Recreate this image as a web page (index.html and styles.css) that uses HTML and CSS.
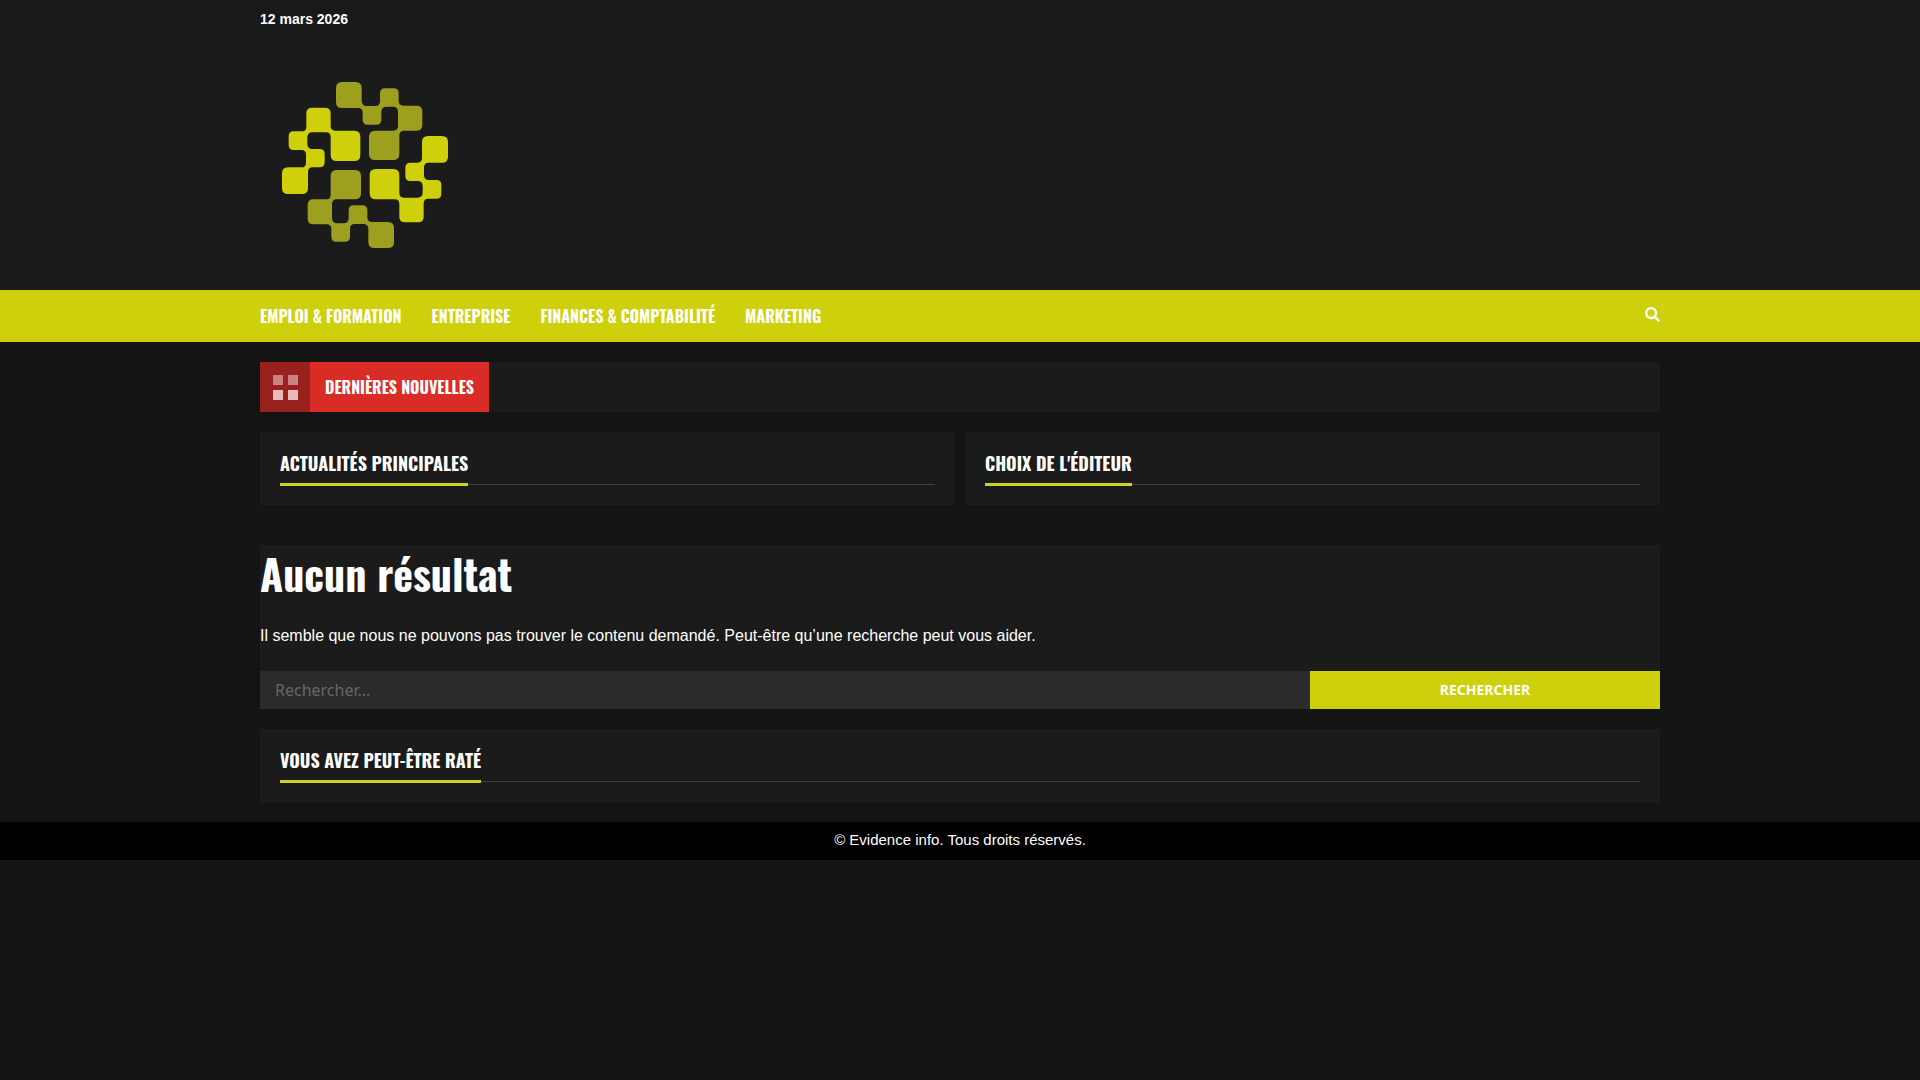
FILE: index.html
```html
<!DOCTYPE html>
<html lang="fr">
<head>
  <meta charset="UTF-8">
  <meta name="viewport" content="width=device-width, initial-scale=1">
  <title>Aucun résultat - Evidence info</title>
  <link rel="stylesheet" href="styles.css">
</head>
<body>
  <header class="site-header">
    <div class="top-bar">
      <div class="container">
        <span class="date">12 mars 2026</span>
      </div>
    </div>
    <div class="branding">
      <div class="container">
        <a href="#" class="logo" aria-label="Evidence info">
          <svg viewBox="0 0 570 570" width="190" height="190">
            <defs>
              <path id="arm-top" d="M216 36H257Q275 36 275 54V94Q276 108 290 108H316Q330 108 330 94V70Q330 55 345 55H371Q386 55 386 70V93Q386 107 400 107H440Q457 107 457 124V165Q457 182 440 182H402Q388 182 388 196V252Q388 270 370 270H315Q297 270 297 252V200Q297 182 315 182H370Q384 182 384 168V126Q384 110 368 110H350Q334 110 334 126V149Q334 164 319 164H293Q278 164 278 149V128Q278 114 264 114H216Q198 114 198 96V54Q198 36 216 36Z"/>
              <path id="arm-left" d="M126 113H165Q182 113 182 130V168Q182 182 196 182H253Q271 182 271 200V255Q271 273 253 273H200Q182 273 182 255V201Q182 187 168 187H128Q112 187 112 203V221Q112 237 128 237H149Q164 237 164 252V277Q164 292 149 292H128Q114 292 114 306V354Q114 372 96 372H54Q36 372 36 354V310Q36 292 54 292H94Q108 292 108 278V254Q108 240 94 240H71Q56 240 56 225V199Q56 184 71 184H95Q109 184 109 170V130Q109 113 126 113Z"/>
            </defs>
            <g fill="#9d9f1f">
              <use href="#arm-top"/>
              <use href="#arm-top" transform="rotate(180 285 285)"/>
            </g>
            <g fill="#cdd00a">
              <use href="#arm-left"/>
              <use href="#arm-left" transform="rotate(180 285 285)"/>
            </g>
          </svg>
        </a>
      </div>
    </div>
    <nav class="main-nav">
      <div class="container">
        <ul class="menu">
          <li><a href="#">Emploi &amp; Formation</a></li>
          <li><a href="#">Entreprise</a></li>
          <li><a href="#">Finances &amp; Comptabilité</a></li>
          <li><a href="#">Marketing</a></li>
        </ul>
        <button type="button" class="search-toggle" aria-label="Rechercher">
          <svg viewBox="0 0 512 512" width="15" height="15" fill="currentColor">
            <path d="M505 442.7L405.300 343c-4.500-4.500-10.600-7-17-7H372c27.600-35.300 44-79.700 44-128C416 93.100 322.900 0 208 0S0 93.100 0 208s93.100 208 208 208c48.300 0 92.700-16.400 128-44v16.300c0 6.400 2.500 12.500 7 17l99.700 99.700c9.400 9.400 24.600 9.400 33.900 0l28.300-28.300c9.400-9.400 9.400-24.600.1-34zM208 336c-70.700 0-128-57.200-128-128 0-70.700 57.200-128 128-128 70.700 0 128 57.200 128 128 0 70.700-57.200 128-128 128z"/>
          </svg>
        </button>
      </div>
    </nav>
  </header>

  <main class="container content">
    <!-- bandeau des dernières nouvelles -->
    <div class="news-bar">
      <div class="news-icon">
        <span></span><span></span><span></span><span></span>
      </div>
      <div class="news-title">Dernières nouvelles</div>
    </div>

    <div class="columns">
      <section class="card">
        <h2 class="card-title"><span>Actualités principales</span></h2>
      </section>
      <section class="card">
        <h2 class="card-title"><span>Choix de l'éditeur</span></h2>
      </section>
    </div>

    <section class="no-results">
      <h1>Aucun résultat</h1>
      <p>Il semble que nous ne pouvons pas trouver le contenu demandé. Peut-être qu’une recherche peut vous aider.</p>
      <form class="search-form">
        <input type="search" placeholder="Rechercher…" aria-label="Rechercher">
        <button type="submit">Rechercher</button>
      </form>
    </section>

    <section class="card">
      <h2 class="card-title"><span>Vous avez peut-être raté</span></h2>
    </section>
  </main>

  <footer class="site-footer">© Evidence info. Tous droits réservés.</footer>
</body>
</html>
```

FILE: styles.css
```css
* {
  box-sizing: border-box;
}
body {
  margin: 0;
  background-color: #141414;
  color: #fff;
  font-family: "Liberation Sans", Arial, sans-serif;
  font-size: 16px;
  line-height: 26px;
}
h1, h2, p, ul {
  margin: 0;
  padding: 0;
}
a {
  color: inherit;
  text-decoration: none;
}
.container {
  width: 100%;
  max-width: 1400px;
  margin: 0 auto;
}

/* header */
.top-bar {
  background-color: #191919;
  padding: 6px 0 8px;
  font-size: 14px;
  font-weight: bold;
}
.branding {
  background-color: #1b1b1b;
  padding: 30px 0;
}
.logo {
  display: inline-block;
  vertical-align: top;
  margin-left: 10px;
}
.logo svg {
  display: block;
}
.main-nav {
  background-color: #cdd00a;
}
.main-nav .container {
  display: flex;
  justify-content: space-between;
  align-items: center;
  min-height: 52px;
}
.menu {
  display: flex;
  flex-wrap: wrap;
  gap: 0 30px;
  list-style: none;
}
.menu,
.news-title,
.card-title,
.no-results h1 {
  font-family: Oswald, "Liberation Sans Narrow", "Open Sans", sans-serif;
  font-weight: bold;
}
.menu,
.news-title,
.card-title {
  text-transform: uppercase;
}
.search-toggle {
  border: 0;
  padding: 0 0 3px;
  background: none;
  color: #fff;
}
.search-toggle svg {
  display: block;
}

/* content */
.content {
  padding: 20px 0;
}
.news-bar {
  display: flex;
  min-height: 50px;
  margin-bottom: 20px;
  background-color: #1b1b1b;
}
.news-icon {
  display: grid;
  grid-template-columns: 10px 10px;
  grid-auto-rows: 10px;
  gap: 5px;
  place-content: center;
  width: 50px;
  background-color: #98201d;
}
.news-icon span {
  background-color: #e9bcbb;
}
.news-icon span:nth-child(-n+2) {
  background-color: #cc8280;
}
.news-title {
  padding: 0 15px;
  background-color: #da2c27;
  line-height: 50px;
}
.columns {
  display: grid;
  grid-template-columns: 1fr 1fr;
  gap: 10px;
  margin-bottom: 40px;
}
.card {
  padding: 20px 20px 19px;
  background-color: #1b1b1b;
}
.card-title {
  position: relative;
  font-size: 18px;
  line-height: 22px;
}
.card-title span {
  display: inline-block;
  position: relative;
  z-index: 1;
  padding-bottom: 9px;
  border-bottom: 3px solid #cdd02b;
  vertical-align: top;
}
.card-title::after {
  content: "";
  position: absolute;
  left: 0;
  right: 0;
  bottom: 1px;
  height: 1px;
  background-color: #404040;
}
.no-results {
  margin-bottom: 20px;
  background-color: #1b1b1b;
}
.no-results h1 {
  font-size: 42px;
  line-height: 56px;
}
.no-results p {
  padding: 22px 0;
}
.search-form {
  display: flex;
}
.search-form input,
.search-form button {
  height: 38px;
  border: 0;
  border-radius: 0;
  font-family: "Noto Sans", sans-serif;
}
.search-form input {
  width: 75%;
  padding: 0 15px;
  background-color: #2b2b2b;
  color: #fff;
  font-size: 16px;
}
.search-form input::placeholder {
  color: #666;
}
.search-form button {
  width: 25%;
  padding: 0 15px 2px;
  background-color: #cdd00a;
  color: #fff;
  font-size: 14px;
  font-weight: bold;
  text-transform: uppercase;
}

.site-footer {
  padding: 5px 20px 7px;
  background-color: #000;
  font-size: 15px;
  text-align: center;
}
```
